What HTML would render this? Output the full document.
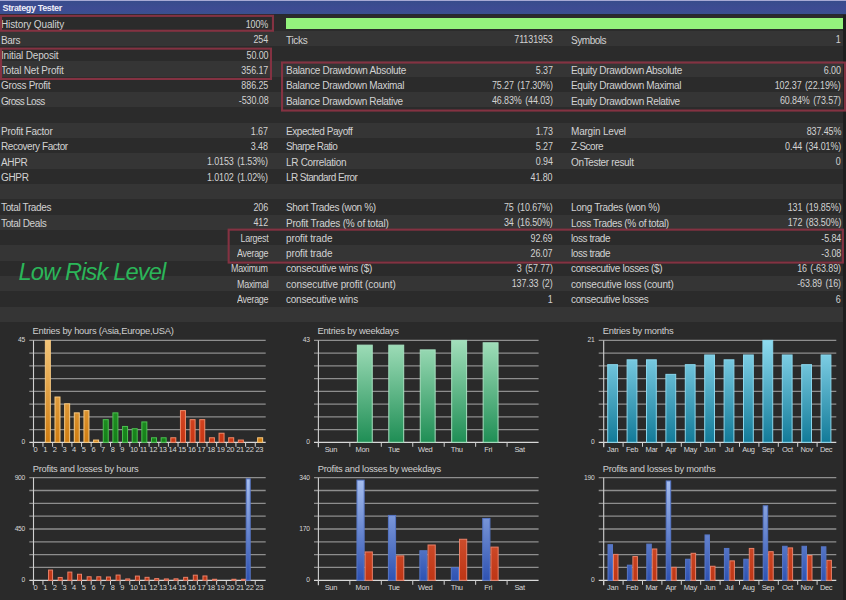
<!DOCTYPE html>
<html><head><meta charset="utf-8">
<style>
html,body{margin:0;padding:0;}
body{width:846px;height:600px;position:relative;overflow:hidden;background:#2a2a2a;font-family:"Liberation Sans",sans-serif;}
.a{position:absolute;white-space:pre;}
.row{position:absolute;left:0;width:843px;}
.t{position:absolute;white-space:pre;color:#d2d2d2;font-size:10px;line-height:12px;letter-spacing:-0.32px;}
.n{position:absolute;white-space:pre;color:#d2d2d2;font-size:10.4px;line-height:12px;letter-spacing:-0.1px;word-spacing:1.2px;text-align:right;transform:scaleX(0.86);transform-origin:right center;}
.box{position:absolute;border:2px solid #843242;box-sizing:border-box;}
.ct{position:absolute;white-space:pre;color:#cfcfcf;font-size:9.4px;line-height:11px;letter-spacing:-0.25px;}
.yl{position:absolute;white-space:pre;color:#d8d8d8;font-size:6.7px;line-height:8px;text-align:right;letter-spacing:-0.3px;}
.xl{position:absolute;white-space:pre;color:#d8d8d8;font-size:7.5px;line-height:8px;letter-spacing:-0.3px;}
</style></head><body>

<div class="a" style="left:0;top:0;width:846px;height:1px;background:#a7a9d4"></div>
<div class="a" style="left:0;top:1px;width:846px;height:12.8px;background:linear-gradient(#384c8c,#3e4b93 60%,#39508e)"></div>
<div class="a" style="left:0;top:13.8px;width:846px;height:1.4px;background:#262830"></div>
<div class="a" style="left:2.6px;top:2.6px;color:#eeeef8;font-weight:bold;font-size:9px;line-height:11px;letter-spacing:-0.38px">Strategy Tester</div>
<div class="a" style="left:843px;top:15px;width:3px;height:585px;background:#1e1e1e"></div>
<div class="row" style="top:15.30px;height:15.35px;background:#2b2b2b"></div>
<div class="row" style="top:30.63px;height:15.35px;background:#353535"></div>
<div class="row" style="top:45.96px;height:15.35px;background:#2b2b2b"></div>
<div class="row" style="top:61.29px;height:15.35px;background:#353535"></div>
<div class="row" style="top:76.62px;height:15.35px;background:#2b2b2b"></div>
<div class="row" style="top:91.95px;height:15.35px;background:#353535"></div>
<div class="row" style="top:107.28px;height:15.35px;background:#2b2b2b"></div>
<div class="row" style="top:122.61px;height:15.35px;background:#353535"></div>
<div class="row" style="top:137.94px;height:15.35px;background:#2b2b2b"></div>
<div class="row" style="top:153.27px;height:15.35px;background:#353535"></div>
<div class="row" style="top:168.60px;height:15.35px;background:#2b2b2b"></div>
<div class="row" style="top:183.93px;height:15.35px;background:#353535"></div>
<div class="row" style="top:199.26px;height:15.35px;background:#2b2b2b"></div>
<div class="row" style="top:214.59px;height:15.35px;background:#353535"></div>
<div class="row" style="top:229.92px;height:15.35px;background:#2b2b2b"></div>
<div class="row" style="top:245.25px;height:15.35px;background:#353535"></div>
<div class="row" style="top:260.58px;height:15.35px;background:#2b2b2b"></div>
<div class="row" style="top:275.91px;height:15.35px;background:#353535"></div>
<div class="row" style="top:291.24px;height:15.35px;background:#2b2b2b"></div>
<div class="row" style="top:306.57px;height:15.35px;background:#353535"></div>
<div class="t" style="left:1.0px;top:19.33px;letter-spacing:-0.13px">History Quality</div>
<div class="n" style="right:577.9px;top:18.98px">100%</div>
<div class="t" style="left:1.0px;top:34.59px;letter-spacing:-0.33px">Bars</div>
<div class="n" style="right:577.9px;top:34.24px">254</div>
<div class="t" style="left:286.0px;top:34.59px;letter-spacing:-0.33px">Ticks</div>
<div class="n" style="right:293.6px;top:34.24px">71131953</div>
<div class="t" style="left:571.0px;top:34.59px;letter-spacing:-0.457px">Symbols</div>
<div class="n" style="right:5.1px;top:34.24px">1</div>
<div class="t" style="left:1.0px;top:49.85px;letter-spacing:-0.175px">Initial Deposit</div>
<div class="n" style="right:577.9px;top:49.50px">50.00</div>
<div class="t" style="left:1.0px;top:65.11px;letter-spacing:-0.19px">Total Net Profit</div>
<div class="n" style="right:577.9px;top:64.76px">356.17</div>
<div class="t" style="left:286.0px;top:65.11px;letter-spacing:-0.287px">Balance Drawdown Absolute</div>
<div class="n" style="right:293.6px;top:64.76px">5.37</div>
<div class="t" style="left:571.0px;top:65.11px;letter-spacing:-0.33px">Equity Drawdown Absolute</div>
<div class="n" style="right:5.1px;top:64.76px">6.00</div>
<div class="t" style="left:1.0px;top:80.37px;letter-spacing:-0.3px">Gross Profit</div>
<div class="n" style="right:577.9px;top:80.02px">886.25</div>
<div class="t" style="left:286.0px;top:80.37px;letter-spacing:-0.33px">Balance Drawdown Maximal</div>
<div class="n" style="right:293.6px;top:80.02px">75.27 (17.30%)</div>
<div class="t" style="left:571.0px;top:80.37px;letter-spacing:-0.33px">Equity Drawdown Maximal</div>
<div class="n" style="right:5.1px;top:80.02px">102.37 (22.19%)</div>
<div class="t" style="left:1.0px;top:95.63px;letter-spacing:-0.7px">Gross Loss</div>
<div class="n" style="right:577.9px;top:95.28px">-530.08</div>
<div class="t" style="left:286.0px;top:95.63px;letter-spacing:-0.33px">Balance Drawdown Relative</div>
<div class="n" style="right:293.6px;top:95.28px">46.83% (44.03)</div>
<div class="t" style="left:571.0px;top:95.63px;letter-spacing:-0.33px">Equity Drawdown Relative</div>
<div class="n" style="right:5.1px;top:95.28px">60.84% (73.57)</div>
<div class="t" style="left:1.0px;top:126.15px;letter-spacing:-0.227px">Profit Factor</div>
<div class="n" style="right:577.9px;top:125.80px">1.67</div>
<div class="t" style="left:286.0px;top:126.15px;letter-spacing:-0.419px">Expected Payoff</div>
<div class="n" style="right:293.6px;top:125.80px">1.73</div>
<div class="t" style="left:571.0px;top:126.15px;letter-spacing:-0.203px">Margin Level</div>
<div class="n" style="right:5.1px;top:125.80px">837.45%</div>
<div class="t" style="left:1.0px;top:141.41px;letter-spacing:-0.445px">Recovery Factor</div>
<div class="n" style="right:577.9px;top:141.06px">3.48</div>
<div class="t" style="left:286.0px;top:141.41px;letter-spacing:-0.6px">Sharpe Ratio</div>
<div class="n" style="right:293.6px;top:141.06px">5.27</div>
<div class="t" style="left:571.0px;top:141.41px;letter-spacing:-0.5px">Z-Score</div>
<div class="n" style="right:5.1px;top:141.06px">0.44 (34.01%)</div>
<div class="t" style="left:1.0px;top:156.67px;letter-spacing:-0.33px">AHPR</div>
<div class="n" style="right:577.9px;top:156.32px">1.0153 (1.53%)</div>
<div class="t" style="left:286.0px;top:156.67px;letter-spacing:-0.309px">LR Correlation</div>
<div class="n" style="right:293.6px;top:156.32px">0.94</div>
<div class="t" style="left:571.0px;top:156.67px;letter-spacing:-0.345px">OnTester result</div>
<div class="n" style="right:5.1px;top:156.32px">0</div>
<div class="t" style="left:1.0px;top:171.93px;letter-spacing:-0.33px">GHPR</div>
<div class="n" style="right:577.9px;top:171.58px">1.0102 (1.02%)</div>
<div class="t" style="left:286.0px;top:171.93px;letter-spacing:-0.576px">LR Standard Error</div>
<div class="n" style="right:293.6px;top:171.58px">41.80</div>
<div class="t" style="left:1.0px;top:202.45px;letter-spacing:-0.368px">Total Trades</div>
<div class="n" style="right:577.9px;top:202.10px">206</div>
<div class="t" style="left:286.0px;top:202.45px;letter-spacing:-0.345px">Short Trades (won %)</div>
<div class="n" style="right:293.6px;top:202.10px">75 (10.67%)</div>
<div class="t" style="left:571.0px;top:202.45px;letter-spacing:-0.333px">Long Trades (won %)</div>
<div class="n" style="right:5.1px;top:202.10px">131 (19.85%)</div>
<div class="t" style="left:1.0px;top:217.71px;letter-spacing:-0.367px">Total Deals</div>
<div class="n" style="right:577.9px;top:217.36px">412</div>
<div class="t" style="left:286.0px;top:217.71px;letter-spacing:-0.203px">Profit Trades (% of total)</div>
<div class="n" style="right:293.6px;top:217.36px">34 (16.50%)</div>
<div class="t" style="left:571.0px;top:217.71px;letter-spacing:-0.324px">Loss Trades (% of total)</div>
<div class="n" style="right:5.1px;top:217.36px">172 (83.50%)</div>
<div class="n" style="right:577.9px;top:232.97px;letter-spacing:-0.33px;word-spacing:0">Largest</div>
<div class="t" style="left:286.0px;top:232.97px;letter-spacing:-0.12px">profit trade</div>
<div class="n" style="right:293.6px;top:232.62px">92.69</div>
<div class="t" style="left:571.0px;top:232.97px;letter-spacing:-0.433px">loss trade</div>
<div class="n" style="right:5.1px;top:232.62px">-5.84</div>
<div class="n" style="right:577.9px;top:248.23px;letter-spacing:-0.33px;word-spacing:0">Average</div>
<div class="t" style="left:286.0px;top:248.23px;letter-spacing:-0.12px">profit trade</div>
<div class="n" style="right:293.6px;top:247.88px">26.07</div>
<div class="t" style="left:571.0px;top:248.23px;letter-spacing:-0.433px">loss trade</div>
<div class="n" style="right:5.1px;top:247.88px">-3.08</div>
<div class="n" style="right:577.9px;top:263.49px;letter-spacing:-0.33px;word-spacing:0">Maximum</div>
<div class="t" style="left:286.0px;top:263.49px;letter-spacing:-0.224px">consecutive wins ($)</div>
<div class="n" style="right:293.6px;top:263.14px">3 (57.77)</div>
<div class="t" style="left:571.0px;top:263.49px;letter-spacing:-0.348px">consecutive losses ($)</div>
<div class="n" style="right:5.1px;top:263.14px">16 (-63.89)</div>
<div class="n" style="right:577.9px;top:278.75px;letter-spacing:-0.33px;word-spacing:0">Maximal</div>
<div class="t" style="left:286.0px;top:278.75px;letter-spacing:-0.08px">consecutive profit (count)</div>
<div class="n" style="right:293.6px;top:278.40px">137.33 (2)</div>
<div class="t" style="left:571.0px;top:278.75px;letter-spacing:-0.197px">consecutive loss (count)</div>
<div class="n" style="right:5.1px;top:278.40px">-63.89 (16)</div>
<div class="n" style="right:577.9px;top:294.01px;letter-spacing:-0.33px;word-spacing:0">Average</div>
<div class="t" style="left:286.0px;top:294.01px;letter-spacing:-0.226px">consecutive wins</div>
<div class="n" style="right:293.6px;top:293.66px">1</div>
<div class="t" style="left:571.0px;top:294.01px;letter-spacing:-0.361px">consecutive losses</div>
<div class="n" style="right:5.1px;top:293.66px">6</div>
<div class="a" style="left:286px;top:18.2px;width:556.5px;height:10.8px;background:#94f37d"></div>
<svg class="a" style="left:0;top:0" width="846" height="300" viewBox="0 0 846 300"><rect x="1.05" y="15.85" width="271.90" height="14.90" fill="none" stroke="#843242" stroke-width="2.1"/><rect x="1.05" y="48.65" width="269.90" height="30.30" fill="none" stroke="#843242" stroke-width="2.1"/><rect x="282.05" y="62.55" width="562.90" height="48.00" fill="none" stroke="#843242" stroke-width="2.1"/><rect x="228.65" y="229.65" width="614.20" height="32.90" fill="none" stroke="#843242" stroke-width="2.1"/></svg>
<div class="a" style="left:18.6px;top:258px;color:#2bb659;font-style:italic;font-size:23.7px;line-height:28px;letter-spacing:-0.9px">Low Risk Level</div>
<div class="a" style="left:0;top:321.90px;width:843px;height:278.10px;background:#2a2a2a"></div>
<div class="ct" style="left:32.6px;top:325.2px">Entries by hours (Asia,Europe,USA)</div>
<div class="yl" style="right:821.1px;top:336.3px">45</div>
<div class="yl" style="right:821.1px;top:438.2px">0</div>
<div class="xl" style="left:33.50px;top:445.6px">0</div>
<div class="xl" style="left:43.15px;top:445.6px">1</div>
<div class="xl" style="left:52.80px;top:445.6px">2</div>
<div class="xl" style="left:62.45px;top:445.6px">3</div>
<div class="xl" style="left:72.10px;top:445.6px">4</div>
<div class="xl" style="left:81.75px;top:445.6px">5</div>
<div class="xl" style="left:91.40px;top:445.6px">6</div>
<div class="xl" style="left:101.05px;top:445.6px">7</div>
<div class="xl" style="left:110.70px;top:445.6px">8</div>
<div class="xl" style="left:120.35px;top:445.6px">9</div>
<div class="xl" style="left:130.00px;top:445.6px">10</div>
<div class="xl" style="left:139.65px;top:445.6px">11</div>
<div class="xl" style="left:149.30px;top:445.6px">12</div>
<div class="xl" style="left:158.95px;top:445.6px">13</div>
<div class="xl" style="left:168.60px;top:445.6px">14</div>
<div class="xl" style="left:178.25px;top:445.6px">15</div>
<div class="xl" style="left:187.90px;top:445.6px">16</div>
<div class="xl" style="left:197.55px;top:445.6px">17</div>
<div class="xl" style="left:207.20px;top:445.6px">18</div>
<div class="xl" style="left:216.85px;top:445.6px">19</div>
<div class="xl" style="left:226.50px;top:445.6px">20</div>
<div class="xl" style="left:236.15px;top:445.6px">21</div>
<div class="xl" style="left:245.80px;top:445.6px">22</div>
<div class="xl" style="left:255.45px;top:445.6px">23</div>
<div class="ct" style="left:317.4px;top:325.2px">Entries by weekdays</div>
<div class="yl" style="right:536.4px;top:336.3px">43</div>
<div class="yl" style="right:536.4px;top:438.2px">0</div>
<div class="xl" style="left:310.90px;width:40px;text-align:center;top:445.6px">Sun</div>
<div class="xl" style="left:342.35px;width:40px;text-align:center;top:445.6px">Mon</div>
<div class="xl" style="left:373.80px;width:40px;text-align:center;top:445.6px">Tue</div>
<div class="xl" style="left:405.25px;width:40px;text-align:center;top:445.6px">Wed</div>
<div class="xl" style="left:436.70px;width:40px;text-align:center;top:445.6px">Thu</div>
<div class="xl" style="left:468.15px;width:40px;text-align:center;top:445.6px">Fri</div>
<div class="xl" style="left:499.60px;width:40px;text-align:center;top:445.6px">Sat</div>
<div class="ct" style="left:602.7px;top:325.2px">Entries by months</div>
<div class="yl" style="right:251.7px;top:336.3px">21</div>
<div class="yl" style="right:251.7px;top:438.2px">0</div>
<div class="xl" style="left:592.70px;width:40px;text-align:center;top:445.6px">Jan</div>
<div class="xl" style="left:612.10px;width:40px;text-align:center;top:445.6px">Feb</div>
<div class="xl" style="left:631.50px;width:40px;text-align:center;top:445.6px">Mar</div>
<div class="xl" style="left:650.90px;width:40px;text-align:center;top:445.6px">Apr</div>
<div class="xl" style="left:670.30px;width:40px;text-align:center;top:445.6px">May</div>
<div class="xl" style="left:689.70px;width:40px;text-align:center;top:445.6px">Jun</div>
<div class="xl" style="left:709.10px;width:40px;text-align:center;top:445.6px">Jul</div>
<div class="xl" style="left:728.50px;width:40px;text-align:center;top:445.6px">Aug</div>
<div class="xl" style="left:747.90px;width:40px;text-align:center;top:445.6px">Sep</div>
<div class="xl" style="left:767.30px;width:40px;text-align:center;top:445.6px">Oct</div>
<div class="xl" style="left:786.70px;width:40px;text-align:center;top:445.6px">Nov</div>
<div class="xl" style="left:806.10px;width:40px;text-align:center;top:445.6px">Dec</div>
<div class="ct" style="left:32.7px;top:462.5px">Profits and losses by hours</div>
<div class="yl" style="right:821.1px;top:473.6px">900</div>
<div class="yl" style="right:821.1px;top:524.9px">450</div>
<div class="yl" style="right:821.1px;top:576.2px">0</div>
<div class="xl" style="left:33.50px;top:583.6px">0</div>
<div class="xl" style="left:43.15px;top:583.6px">1</div>
<div class="xl" style="left:52.80px;top:583.6px">2</div>
<div class="xl" style="left:62.45px;top:583.6px">3</div>
<div class="xl" style="left:72.10px;top:583.6px">4</div>
<div class="xl" style="left:81.75px;top:583.6px">5</div>
<div class="xl" style="left:91.40px;top:583.6px">6</div>
<div class="xl" style="left:101.05px;top:583.6px">7</div>
<div class="xl" style="left:110.70px;top:583.6px">8</div>
<div class="xl" style="left:120.35px;top:583.6px">9</div>
<div class="xl" style="left:130.00px;top:583.6px">10</div>
<div class="xl" style="left:139.65px;top:583.6px">11</div>
<div class="xl" style="left:149.30px;top:583.6px">12</div>
<div class="xl" style="left:158.95px;top:583.6px">13</div>
<div class="xl" style="left:168.60px;top:583.6px">14</div>
<div class="xl" style="left:178.25px;top:583.6px">15</div>
<div class="xl" style="left:187.90px;top:583.6px">16</div>
<div class="xl" style="left:197.55px;top:583.6px">17</div>
<div class="xl" style="left:207.20px;top:583.6px">18</div>
<div class="xl" style="left:216.85px;top:583.6px">19</div>
<div class="xl" style="left:226.50px;top:583.6px">20</div>
<div class="xl" style="left:236.15px;top:583.6px">21</div>
<div class="xl" style="left:245.80px;top:583.6px">22</div>
<div class="xl" style="left:255.45px;top:583.6px">23</div>
<div class="ct" style="left:317.7px;top:462.5px">Profits and losses by weekdays</div>
<div class="yl" style="right:536.4px;top:473.6px">340</div>
<div class="yl" style="right:536.4px;top:524.9px">170</div>
<div class="yl" style="right:536.4px;top:576.2px">0</div>
<div class="xl" style="left:310.90px;width:40px;text-align:center;top:583.6px">Sun</div>
<div class="xl" style="left:342.35px;width:40px;text-align:center;top:583.6px">Mon</div>
<div class="xl" style="left:373.80px;width:40px;text-align:center;top:583.6px">Tue</div>
<div class="xl" style="left:405.25px;width:40px;text-align:center;top:583.6px">Wed</div>
<div class="xl" style="left:436.70px;width:40px;text-align:center;top:583.6px">Thu</div>
<div class="xl" style="left:468.15px;width:40px;text-align:center;top:583.6px">Fri</div>
<div class="xl" style="left:499.60px;width:40px;text-align:center;top:583.6px">Sat</div>
<div class="ct" style="left:602.7px;top:462.5px">Profits and losses by months</div>
<div class="yl" style="right:251.7px;top:473.6px">190</div>
<div class="yl" style="right:251.7px;top:576.2px">0</div>
<div class="xl" style="left:592.70px;width:40px;text-align:center;top:583.6px">Jan</div>
<div class="xl" style="left:612.10px;width:40px;text-align:center;top:583.6px">Feb</div>
<div class="xl" style="left:631.50px;width:40px;text-align:center;top:583.6px">Mar</div>
<div class="xl" style="left:650.90px;width:40px;text-align:center;top:583.6px">Apr</div>
<div class="xl" style="left:670.30px;width:40px;text-align:center;top:583.6px">May</div>
<div class="xl" style="left:689.70px;width:40px;text-align:center;top:583.6px">Jun</div>
<div class="xl" style="left:709.10px;width:40px;text-align:center;top:583.6px">Jul</div>
<div class="xl" style="left:728.50px;width:40px;text-align:center;top:583.6px">Aug</div>
<div class="xl" style="left:747.90px;width:40px;text-align:center;top:583.6px">Sep</div>
<div class="xl" style="left:767.30px;width:40px;text-align:center;top:583.6px">Oct</div>
<div class="xl" style="left:786.70px;width:40px;text-align:center;top:583.6px">Nov</div>
<div class="xl" style="left:806.10px;width:40px;text-align:center;top:583.6px">Dec</div>
<svg class="a" style="left:0;top:0" width="846" height="600" viewBox="0 0 846 600"><defs><linearGradient id="gOr" gradientUnits="userSpaceOnUse" x1="0" y1="340.4" x2="0" y2="442.3"><stop offset="0" stop-color="#f3c578"/><stop offset="1" stop-color="#cf7c10"/></linearGradient><linearGradient id="gGr" gradientUnits="userSpaceOnUse" x1="0" y1="340.4" x2="0" y2="442.3"><stop offset="0" stop-color="#40b040"/><stop offset="1" stop-color="#148018"/></linearGradient><linearGradient id="gRd" gradientUnits="userSpaceOnUse" x1="0" y1="340.4" x2="0" y2="442.3"><stop offset="0" stop-color="#f07050"/><stop offset="1" stop-color="#c83512"/></linearGradient><linearGradient id="gWk" gradientUnits="userSpaceOnUse" x1="0" y1="340.4" x2="0" y2="442.3"><stop offset="0" stop-color="#a2dfbb"/><stop offset="1" stop-color="#1f8e55"/></linearGradient><linearGradient id="gMo" gradientUnits="userSpaceOnUse" x1="0" y1="340.4" x2="0" y2="442.3"><stop offset="0" stop-color="#8edbf0"/><stop offset="1" stop-color="#127a98"/></linearGradient><linearGradient id="gBl" gradientUnits="userSpaceOnUse" x1="0" y1="477.7" x2="0" y2="580.3"><stop offset="0" stop-color="#a8c0f0"/><stop offset="1" stop-color="#2e52b2"/></linearGradient><linearGradient id="gRl" gradientUnits="userSpaceOnUse" x1="0" y1="477.7" x2="0" y2="580.3"><stop offset="0" stop-color="#e2704f"/><stop offset="1" stop-color="#bf3514"/></linearGradient></defs><line x1="29.3" y1="340.40" x2="265.7" y2="340.40" stroke="#8e8e8e" stroke-width="1.3"/><line x1="29.3" y1="353.14" x2="265.7" y2="353.14" stroke="#8e8e8e" stroke-width="1.3"/><line x1="29.3" y1="365.88" x2="265.7" y2="365.88" stroke="#8e8e8e" stroke-width="1.3"/><line x1="29.3" y1="378.61" x2="265.7" y2="378.61" stroke="#8e8e8e" stroke-width="1.3"/><line x1="29.3" y1="391.35" x2="265.7" y2="391.35" stroke="#8e8e8e" stroke-width="1.3"/><line x1="29.3" y1="404.09" x2="265.7" y2="404.09" stroke="#8e8e8e" stroke-width="1.3"/><line x1="29.3" y1="416.82" x2="265.7" y2="416.82" stroke="#8e8e8e" stroke-width="1.3"/><line x1="29.3" y1="429.56" x2="265.7" y2="429.56" stroke="#8e8e8e" stroke-width="1.3"/><line x1="29.3" y1="442.30" x2="265.7" y2="442.30" stroke="#d8d8d8" stroke-width="1.3"/><line x1="33.5" y1="340.40" x2="33.5" y2="447.30" stroke="#d0d0d0" stroke-width="1.1"/><line x1="33.30" y1="442.30" x2="33.30" y2="446.80" stroke="#d0d0d0" stroke-width="1"/><line x1="42.95" y1="442.30" x2="42.95" y2="446.80" stroke="#d0d0d0" stroke-width="1"/><line x1="52.60" y1="442.30" x2="52.60" y2="446.80" stroke="#d0d0d0" stroke-width="1"/><line x1="62.25" y1="442.30" x2="62.25" y2="446.80" stroke="#d0d0d0" stroke-width="1"/><line x1="71.90" y1="442.30" x2="71.90" y2="446.80" stroke="#d0d0d0" stroke-width="1"/><line x1="81.55" y1="442.30" x2="81.55" y2="446.80" stroke="#d0d0d0" stroke-width="1"/><line x1="91.20" y1="442.30" x2="91.20" y2="446.80" stroke="#d0d0d0" stroke-width="1"/><line x1="100.85" y1="442.30" x2="100.85" y2="446.80" stroke="#d0d0d0" stroke-width="1"/><line x1="110.50" y1="442.30" x2="110.50" y2="446.80" stroke="#d0d0d0" stroke-width="1"/><line x1="120.15" y1="442.30" x2="120.15" y2="446.80" stroke="#d0d0d0" stroke-width="1"/><line x1="129.80" y1="442.30" x2="129.80" y2="446.80" stroke="#d0d0d0" stroke-width="1"/><line x1="139.45" y1="442.30" x2="139.45" y2="446.80" stroke="#d0d0d0" stroke-width="1"/><line x1="149.10" y1="442.30" x2="149.10" y2="446.80" stroke="#d0d0d0" stroke-width="1"/><line x1="158.75" y1="442.30" x2="158.75" y2="446.80" stroke="#d0d0d0" stroke-width="1"/><line x1="168.40" y1="442.30" x2="168.40" y2="446.80" stroke="#d0d0d0" stroke-width="1"/><line x1="178.05" y1="442.30" x2="178.05" y2="446.80" stroke="#d0d0d0" stroke-width="1"/><line x1="187.70" y1="442.30" x2="187.70" y2="446.80" stroke="#d0d0d0" stroke-width="1"/><line x1="197.35" y1="442.30" x2="197.35" y2="446.80" stroke="#d0d0d0" stroke-width="1"/><line x1="207.00" y1="442.30" x2="207.00" y2="446.80" stroke="#d0d0d0" stroke-width="1"/><line x1="216.65" y1="442.30" x2="216.65" y2="446.80" stroke="#d0d0d0" stroke-width="1"/><line x1="226.30" y1="442.30" x2="226.30" y2="446.80" stroke="#d0d0d0" stroke-width="1"/><line x1="235.95" y1="442.30" x2="235.95" y2="446.80" stroke="#d0d0d0" stroke-width="1"/><line x1="245.60" y1="442.30" x2="245.60" y2="446.80" stroke="#d0d0d0" stroke-width="1"/><line x1="255.25" y1="442.30" x2="255.25" y2="446.80" stroke="#d0d0d0" stroke-width="1"/><rect x="45.35" y="340.40" width="5.00" height="101.90" fill="url(#gOr)" stroke="#f6c880" stroke-width="1"/><rect x="55.00" y="397.01" width="5.00" height="45.29" fill="url(#gOr)" stroke="#f6c880" stroke-width="1"/><rect x="64.65" y="403.80" width="5.00" height="38.50" fill="url(#gOr)" stroke="#f6c880" stroke-width="1"/><rect x="74.30" y="412.86" width="5.00" height="29.44" fill="url(#gOr)" stroke="#f6c880" stroke-width="1"/><rect x="83.95" y="410.60" width="5.00" height="31.70" fill="url(#gOr)" stroke="#f6c880" stroke-width="1"/><rect x="93.60" y="440.04" width="5.00" height="2.26" fill="url(#gOr)" stroke="#f6c880" stroke-width="1"/><rect x="103.25" y="419.66" width="5.00" height="22.64" fill="url(#gGr)" stroke="#4cc050" stroke-width="1"/><rect x="112.90" y="412.86" width="5.00" height="29.44" fill="url(#gGr)" stroke="#4cc050" stroke-width="1"/><rect x="122.55" y="426.45" width="5.00" height="15.85" fill="url(#gGr)" stroke="#4cc050" stroke-width="1"/><rect x="132.20" y="428.71" width="5.00" height="13.59" fill="url(#gGr)" stroke="#4cc050" stroke-width="1"/><rect x="141.85" y="421.92" width="5.00" height="20.38" fill="url(#gGr)" stroke="#4cc050" stroke-width="1"/><rect x="151.50" y="437.77" width="5.00" height="4.53" fill="url(#gGr)" stroke="#4cc050" stroke-width="1"/><rect x="161.15" y="437.77" width="5.00" height="4.53" fill="url(#gGr)" stroke="#4cc050" stroke-width="1"/><rect x="170.80" y="437.77" width="5.00" height="4.53" fill="url(#gRd)" stroke="#f08a68" stroke-width="1"/><rect x="180.45" y="410.60" width="5.00" height="31.70" fill="url(#gRd)" stroke="#f08a68" stroke-width="1"/><rect x="190.10" y="419.66" width="5.00" height="22.64" fill="url(#gRd)" stroke="#f08a68" stroke-width="1"/><rect x="199.75" y="419.66" width="5.00" height="22.64" fill="url(#gRd)" stroke="#f08a68" stroke-width="1"/><rect x="209.40" y="437.77" width="5.00" height="4.53" fill="url(#gRd)" stroke="#f08a68" stroke-width="1"/><rect x="219.05" y="433.24" width="5.00" height="9.06" fill="url(#gRd)" stroke="#f08a68" stroke-width="1"/><rect x="228.70" y="437.77" width="5.00" height="4.53" fill="url(#gRd)" stroke="#f08a68" stroke-width="1"/><rect x="238.35" y="440.04" width="5.00" height="2.26" fill="url(#gRd)" stroke="#f08a68" stroke-width="1"/><rect x="257.65" y="437.77" width="5.00" height="4.53" fill="url(#gOr)" stroke="#f6c880" stroke-width="1"/><line x1="314" y1="340.40" x2="538.6" y2="340.40" stroke="#8e8e8e" stroke-width="1.3"/><line x1="314" y1="353.14" x2="538.6" y2="353.14" stroke="#8e8e8e" stroke-width="1.3"/><line x1="314" y1="365.88" x2="538.6" y2="365.88" stroke="#8e8e8e" stroke-width="1.3"/><line x1="314" y1="378.61" x2="538.6" y2="378.61" stroke="#8e8e8e" stroke-width="1.3"/><line x1="314" y1="391.35" x2="538.6" y2="391.35" stroke="#8e8e8e" stroke-width="1.3"/><line x1="314" y1="404.09" x2="538.6" y2="404.09" stroke="#8e8e8e" stroke-width="1.3"/><line x1="314" y1="416.82" x2="538.6" y2="416.82" stroke="#8e8e8e" stroke-width="1.3"/><line x1="314" y1="429.56" x2="538.6" y2="429.56" stroke="#8e8e8e" stroke-width="1.3"/><line x1="314" y1="442.30" x2="538.6" y2="442.30" stroke="#d8d8d8" stroke-width="1.3"/><line x1="318.4" y1="340.40" x2="318.4" y2="447.30" stroke="#d0d0d0" stroke-width="1.1"/><line x1="318.40" y1="442.30" x2="318.40" y2="446.80" stroke="#d0d0d0" stroke-width="1"/><line x1="349.85" y1="442.30" x2="349.85" y2="446.80" stroke="#d0d0d0" stroke-width="1"/><line x1="381.30" y1="442.30" x2="381.30" y2="446.80" stroke="#d0d0d0" stroke-width="1"/><line x1="412.75" y1="442.30" x2="412.75" y2="446.80" stroke="#d0d0d0" stroke-width="1"/><line x1="444.20" y1="442.30" x2="444.20" y2="446.80" stroke="#d0d0d0" stroke-width="1"/><line x1="475.65" y1="442.30" x2="475.65" y2="446.80" stroke="#d0d0d0" stroke-width="1"/><line x1="507.10" y1="442.30" x2="507.10" y2="446.80" stroke="#d0d0d0" stroke-width="1"/><rect x="357.35" y="345.14" width="14.90" height="97.16" fill="url(#gWk)" stroke="#a6e0bf" stroke-width="1"/><rect x="388.80" y="345.14" width="14.90" height="97.16" fill="url(#gWk)" stroke="#a6e0bf" stroke-width="1"/><rect x="420.25" y="349.88" width="14.90" height="92.42" fill="url(#gWk)" stroke="#a6e0bf" stroke-width="1"/><rect x="451.70" y="340.40" width="14.90" height="101.90" fill="url(#gWk)" stroke="#a6e0bf" stroke-width="1"/><rect x="483.15" y="342.77" width="14.90" height="99.53" fill="url(#gWk)" stroke="#a6e0bf" stroke-width="1"/><line x1="598.7" y1="340.40" x2="836.3" y2="340.40" stroke="#8e8e8e" stroke-width="1.3"/><line x1="598.7" y1="353.14" x2="836.3" y2="353.14" stroke="#8e8e8e" stroke-width="1.3"/><line x1="598.7" y1="365.88" x2="836.3" y2="365.88" stroke="#8e8e8e" stroke-width="1.3"/><line x1="598.7" y1="378.61" x2="836.3" y2="378.61" stroke="#8e8e8e" stroke-width="1.3"/><line x1="598.7" y1="391.35" x2="836.3" y2="391.35" stroke="#8e8e8e" stroke-width="1.3"/><line x1="598.7" y1="404.09" x2="836.3" y2="404.09" stroke="#8e8e8e" stroke-width="1.3"/><line x1="598.7" y1="416.82" x2="836.3" y2="416.82" stroke="#8e8e8e" stroke-width="1.3"/><line x1="598.7" y1="429.56" x2="836.3" y2="429.56" stroke="#8e8e8e" stroke-width="1.3"/><line x1="598.7" y1="442.30" x2="836.3" y2="442.30" stroke="#d8d8d8" stroke-width="1.3"/><line x1="603.7" y1="340.40" x2="603.7" y2="447.30" stroke="#d0d0d0" stroke-width="1.1"/><line x1="603.70" y1="442.30" x2="603.70" y2="446.80" stroke="#d0d0d0" stroke-width="1"/><line x1="623.10" y1="442.30" x2="623.10" y2="446.80" stroke="#d0d0d0" stroke-width="1"/><line x1="642.50" y1="442.30" x2="642.50" y2="446.80" stroke="#d0d0d0" stroke-width="1"/><line x1="661.90" y1="442.30" x2="661.90" y2="446.80" stroke="#d0d0d0" stroke-width="1"/><line x1="681.30" y1="442.30" x2="681.30" y2="446.80" stroke="#d0d0d0" stroke-width="1"/><line x1="700.70" y1="442.30" x2="700.70" y2="446.80" stroke="#d0d0d0" stroke-width="1"/><line x1="720.10" y1="442.30" x2="720.10" y2="446.80" stroke="#d0d0d0" stroke-width="1"/><line x1="739.50" y1="442.30" x2="739.50" y2="446.80" stroke="#d0d0d0" stroke-width="1"/><line x1="758.90" y1="442.30" x2="758.90" y2="446.80" stroke="#d0d0d0" stroke-width="1"/><line x1="778.30" y1="442.30" x2="778.30" y2="446.80" stroke="#d0d0d0" stroke-width="1"/><line x1="797.70" y1="442.30" x2="797.70" y2="446.80" stroke="#d0d0d0" stroke-width="1"/><line x1="817.10" y1="442.30" x2="817.10" y2="446.80" stroke="#d0d0d0" stroke-width="1"/><rect x="607.70" y="364.66" width="9.80" height="77.64" fill="url(#gMo)" stroke="#8ad6ec" stroke-width="1"/><rect x="627.10" y="359.81" width="9.80" height="82.49" fill="url(#gMo)" stroke="#8ad6ec" stroke-width="1"/><rect x="646.50" y="359.81" width="9.80" height="82.49" fill="url(#gMo)" stroke="#8ad6ec" stroke-width="1"/><rect x="665.90" y="374.37" width="9.80" height="67.93" fill="url(#gMo)" stroke="#8ad6ec" stroke-width="1"/><rect x="685.30" y="364.66" width="9.80" height="77.64" fill="url(#gMo)" stroke="#8ad6ec" stroke-width="1"/><rect x="704.70" y="354.96" width="9.80" height="87.34" fill="url(#gMo)" stroke="#8ad6ec" stroke-width="1"/><rect x="724.10" y="359.81" width="9.80" height="82.49" fill="url(#gMo)" stroke="#8ad6ec" stroke-width="1"/><rect x="743.50" y="354.96" width="9.80" height="87.34" fill="url(#gMo)" stroke="#8ad6ec" stroke-width="1"/><rect x="762.90" y="340.40" width="9.80" height="101.90" fill="url(#gMo)" stroke="#8ad6ec" stroke-width="1"/><rect x="782.30" y="354.96" width="9.80" height="87.34" fill="url(#gMo)" stroke="#8ad6ec" stroke-width="1"/><rect x="801.70" y="364.66" width="9.80" height="77.64" fill="url(#gMo)" stroke="#8ad6ec" stroke-width="1"/><rect x="821.10" y="354.96" width="9.80" height="87.34" fill="url(#gMo)" stroke="#8ad6ec" stroke-width="1"/><line x1="29.3" y1="477.70" x2="265.7" y2="477.70" stroke="#8e8e8e" stroke-width="1.3"/><line x1="29.3" y1="490.52" x2="265.7" y2="490.52" stroke="#8e8e8e" stroke-width="1.3"/><line x1="29.3" y1="503.35" x2="265.7" y2="503.35" stroke="#8e8e8e" stroke-width="1.3"/><line x1="29.3" y1="516.17" x2="265.7" y2="516.17" stroke="#8e8e8e" stroke-width="1.3"/><line x1="29.3" y1="529.00" x2="265.7" y2="529.00" stroke="#8e8e8e" stroke-width="1.3"/><line x1="29.3" y1="541.82" x2="265.7" y2="541.82" stroke="#8e8e8e" stroke-width="1.3"/><line x1="29.3" y1="554.65" x2="265.7" y2="554.65" stroke="#8e8e8e" stroke-width="1.3"/><line x1="29.3" y1="567.47" x2="265.7" y2="567.47" stroke="#8e8e8e" stroke-width="1.3"/><line x1="29.3" y1="580.30" x2="265.7" y2="580.30" stroke="#d8d8d8" stroke-width="1.3"/><line x1="33.5" y1="477.70" x2="33.5" y2="585.30" stroke="#d0d0d0" stroke-width="1.1"/><line x1="33.30" y1="580.30" x2="33.30" y2="584.80" stroke="#d0d0d0" stroke-width="1"/><line x1="42.95" y1="580.30" x2="42.95" y2="584.80" stroke="#d0d0d0" stroke-width="1"/><line x1="52.60" y1="580.30" x2="52.60" y2="584.80" stroke="#d0d0d0" stroke-width="1"/><line x1="62.25" y1="580.30" x2="62.25" y2="584.80" stroke="#d0d0d0" stroke-width="1"/><line x1="71.90" y1="580.30" x2="71.90" y2="584.80" stroke="#d0d0d0" stroke-width="1"/><line x1="81.55" y1="580.30" x2="81.55" y2="584.80" stroke="#d0d0d0" stroke-width="1"/><line x1="91.20" y1="580.30" x2="91.20" y2="584.80" stroke="#d0d0d0" stroke-width="1"/><line x1="100.85" y1="580.30" x2="100.85" y2="584.80" stroke="#d0d0d0" stroke-width="1"/><line x1="110.50" y1="580.30" x2="110.50" y2="584.80" stroke="#d0d0d0" stroke-width="1"/><line x1="120.15" y1="580.30" x2="120.15" y2="584.80" stroke="#d0d0d0" stroke-width="1"/><line x1="129.80" y1="580.30" x2="129.80" y2="584.80" stroke="#d0d0d0" stroke-width="1"/><line x1="139.45" y1="580.30" x2="139.45" y2="584.80" stroke="#d0d0d0" stroke-width="1"/><line x1="149.10" y1="580.30" x2="149.10" y2="584.80" stroke="#d0d0d0" stroke-width="1"/><line x1="158.75" y1="580.30" x2="158.75" y2="584.80" stroke="#d0d0d0" stroke-width="1"/><line x1="168.40" y1="580.30" x2="168.40" y2="584.80" stroke="#d0d0d0" stroke-width="1"/><line x1="178.05" y1="580.30" x2="178.05" y2="584.80" stroke="#d0d0d0" stroke-width="1"/><line x1="187.70" y1="580.30" x2="187.70" y2="584.80" stroke="#d0d0d0" stroke-width="1"/><line x1="197.35" y1="580.30" x2="197.35" y2="584.80" stroke="#d0d0d0" stroke-width="1"/><line x1="207.00" y1="580.30" x2="207.00" y2="584.80" stroke="#d0d0d0" stroke-width="1"/><line x1="216.65" y1="580.30" x2="216.65" y2="584.80" stroke="#d0d0d0" stroke-width="1"/><line x1="226.30" y1="580.30" x2="226.30" y2="584.80" stroke="#d0d0d0" stroke-width="1"/><line x1="235.95" y1="580.30" x2="235.95" y2="584.80" stroke="#d0d0d0" stroke-width="1"/><line x1="245.60" y1="580.30" x2="245.60" y2="584.80" stroke="#d0d0d0" stroke-width="1"/><line x1="255.25" y1="580.30" x2="255.25" y2="584.80" stroke="#d0d0d0" stroke-width="1"/><rect x="48.55" y="570.04" width="4.00" height="10.26" fill="url(#gRl)" stroke="#e88068" stroke-width="1"/><rect x="58.20" y="577.45" width="4.00" height="2.85" fill="url(#gRl)" stroke="#e88068" stroke-width="1"/><rect x="67.85" y="572.09" width="4.00" height="8.21" fill="url(#gRl)" stroke="#e88068" stroke-width="1"/><rect x="77.50" y="574.26" width="4.00" height="6.04" fill="url(#gRl)" stroke="#e88068" stroke-width="1"/><rect x="87.15" y="576.77" width="4.00" height="3.53" fill="url(#gRl)" stroke="#e88068" stroke-width="1"/><rect x="96.80" y="576.77" width="4.00" height="3.53" fill="url(#gRl)" stroke="#e88068" stroke-width="1"/><rect x="106.45" y="576.99" width="4.00" height="3.31" fill="url(#gRl)" stroke="#e88068" stroke-width="1"/><rect x="116.10" y="575.06" width="4.00" height="5.24" fill="url(#gRl)" stroke="#e88068" stroke-width="1"/><rect x="125.75" y="578.93" width="4.00" height="1.37" fill="url(#gRl)" stroke="#e88068" stroke-width="1"/><rect x="135.40" y="576.08" width="4.00" height="4.22" fill="url(#gRl)" stroke="#e88068" stroke-width="1"/><rect x="145.05" y="577.34" width="4.00" height="2.96" fill="url(#gRl)" stroke="#e88068" stroke-width="1"/><rect x="154.70" y="578.59" width="4.00" height="1.71" fill="url(#gRl)" stroke="#e88068" stroke-width="1"/><rect x="164.35" y="578.93" width="4.00" height="1.37" fill="url(#gRl)" stroke="#e88068" stroke-width="1"/><rect x="174.00" y="578.82" width="4.00" height="1.48" fill="url(#gRl)" stroke="#e88068" stroke-width="1"/><rect x="183.65" y="577.34" width="4.00" height="2.96" fill="url(#gRl)" stroke="#e88068" stroke-width="1"/><rect x="193.30" y="575.17" width="4.00" height="5.13" fill="url(#gRl)" stroke="#e88068" stroke-width="1"/><rect x="202.95" y="575.97" width="4.00" height="4.33" fill="url(#gRl)" stroke="#e88068" stroke-width="1"/><rect x="212.60" y="579.27" width="4.00" height="1.03" fill="url(#gRl)" stroke="#e88068" stroke-width="1"/><rect x="231.90" y="579.27" width="4.00" height="1.03" fill="url(#gRl)" stroke="#e88068" stroke-width="1"/><rect x="241.55" y="579.27" width="4.00" height="1.03" fill="url(#gRl)" stroke="#e88068" stroke-width="1"/><rect x="246.20" y="478.84" width="4.00" height="101.46" fill="url(#gBl)" stroke="#5676c6" stroke-width="1"/><line x1="314" y1="477.70" x2="538.6" y2="477.70" stroke="#8e8e8e" stroke-width="1.3"/><line x1="314" y1="490.52" x2="538.6" y2="490.52" stroke="#8e8e8e" stroke-width="1.3"/><line x1="314" y1="503.35" x2="538.6" y2="503.35" stroke="#8e8e8e" stroke-width="1.3"/><line x1="314" y1="516.17" x2="538.6" y2="516.17" stroke="#8e8e8e" stroke-width="1.3"/><line x1="314" y1="529.00" x2="538.6" y2="529.00" stroke="#8e8e8e" stroke-width="1.3"/><line x1="314" y1="541.82" x2="538.6" y2="541.82" stroke="#8e8e8e" stroke-width="1.3"/><line x1="314" y1="554.65" x2="538.6" y2="554.65" stroke="#8e8e8e" stroke-width="1.3"/><line x1="314" y1="567.47" x2="538.6" y2="567.47" stroke="#8e8e8e" stroke-width="1.3"/><line x1="314" y1="580.30" x2="538.6" y2="580.30" stroke="#d8d8d8" stroke-width="1.3"/><line x1="318.4" y1="477.70" x2="318.4" y2="585.30" stroke="#d0d0d0" stroke-width="1.1"/><line x1="318.40" y1="580.30" x2="318.40" y2="584.80" stroke="#d0d0d0" stroke-width="1"/><line x1="349.85" y1="580.30" x2="349.85" y2="584.80" stroke="#d0d0d0" stroke-width="1"/><line x1="381.30" y1="580.30" x2="381.30" y2="584.80" stroke="#d0d0d0" stroke-width="1"/><line x1="412.75" y1="580.30" x2="412.75" y2="584.80" stroke="#d0d0d0" stroke-width="1"/><line x1="444.20" y1="580.30" x2="444.20" y2="584.80" stroke="#d0d0d0" stroke-width="1"/><line x1="475.65" y1="580.30" x2="475.65" y2="584.80" stroke="#d0d0d0" stroke-width="1"/><line x1="507.10" y1="580.30" x2="507.10" y2="584.80" stroke="#d0d0d0" stroke-width="1"/><rect x="356.95" y="480.11" width="7.20" height="100.19" fill="url(#gBl)" stroke="#5676c6" stroke-width="1"/><rect x="365.15" y="551.93" width="7.20" height="28.37" fill="url(#gRl)" stroke="#e88068" stroke-width="1"/><rect x="388.40" y="515.42" width="7.20" height="64.88" fill="url(#gBl)" stroke="#5676c6" stroke-width="1"/><rect x="396.60" y="555.86" width="7.20" height="24.44" fill="url(#gRl)" stroke="#e88068" stroke-width="1"/><rect x="419.85" y="550.73" width="7.20" height="29.57" fill="url(#gBl)" stroke="#5676c6" stroke-width="1"/><rect x="428.05" y="544.99" width="7.20" height="35.31" fill="url(#gRl)" stroke="#e88068" stroke-width="1"/><rect x="451.30" y="567.63" width="7.20" height="12.67" fill="url(#gBl)" stroke="#5676c6" stroke-width="1"/><rect x="459.50" y="539.26" width="7.20" height="41.04" fill="url(#gRl)" stroke="#e88068" stroke-width="1"/><rect x="482.75" y="518.44" width="7.20" height="61.86" fill="url(#gBl)" stroke="#5676c6" stroke-width="1"/><rect x="490.95" y="547.11" width="7.20" height="33.19" fill="url(#gRl)" stroke="#e88068" stroke-width="1"/><line x1="598.7" y1="477.70" x2="836.3" y2="477.70" stroke="#8e8e8e" stroke-width="1.3"/><line x1="598.7" y1="490.52" x2="836.3" y2="490.52" stroke="#8e8e8e" stroke-width="1.3"/><line x1="598.7" y1="503.35" x2="836.3" y2="503.35" stroke="#8e8e8e" stroke-width="1.3"/><line x1="598.7" y1="516.17" x2="836.3" y2="516.17" stroke="#8e8e8e" stroke-width="1.3"/><line x1="598.7" y1="529.00" x2="836.3" y2="529.00" stroke="#8e8e8e" stroke-width="1.3"/><line x1="598.7" y1="541.82" x2="836.3" y2="541.82" stroke="#8e8e8e" stroke-width="1.3"/><line x1="598.7" y1="554.65" x2="836.3" y2="554.65" stroke="#8e8e8e" stroke-width="1.3"/><line x1="598.7" y1="567.47" x2="836.3" y2="567.47" stroke="#8e8e8e" stroke-width="1.3"/><line x1="598.7" y1="580.30" x2="836.3" y2="580.30" stroke="#d8d8d8" stroke-width="1.3"/><line x1="603.7" y1="477.70" x2="603.7" y2="585.30" stroke="#d0d0d0" stroke-width="1.1"/><line x1="603.70" y1="580.30" x2="603.70" y2="584.80" stroke="#d0d0d0" stroke-width="1"/><line x1="623.10" y1="580.30" x2="623.10" y2="584.80" stroke="#d0d0d0" stroke-width="1"/><line x1="642.50" y1="580.30" x2="642.50" y2="584.80" stroke="#d0d0d0" stroke-width="1"/><line x1="661.90" y1="580.30" x2="661.90" y2="584.80" stroke="#d0d0d0" stroke-width="1"/><line x1="681.30" y1="580.30" x2="681.30" y2="584.80" stroke="#d0d0d0" stroke-width="1"/><line x1="700.70" y1="580.30" x2="700.70" y2="584.80" stroke="#d0d0d0" stroke-width="1"/><line x1="720.10" y1="580.30" x2="720.10" y2="584.80" stroke="#d0d0d0" stroke-width="1"/><line x1="739.50" y1="580.30" x2="739.50" y2="584.80" stroke="#d0d0d0" stroke-width="1"/><line x1="758.90" y1="580.30" x2="758.90" y2="584.80" stroke="#d0d0d0" stroke-width="1"/><line x1="778.30" y1="580.30" x2="778.30" y2="584.80" stroke="#d0d0d0" stroke-width="1"/><line x1="797.70" y1="580.30" x2="797.70" y2="584.80" stroke="#d0d0d0" stroke-width="1"/><line x1="817.10" y1="580.30" x2="817.10" y2="584.80" stroke="#d0d0d0" stroke-width="1"/><rect x="608.00" y="544.66" width="4.50" height="35.64" fill="url(#gBl)" stroke="#5676c6" stroke-width="1"/><rect x="613.50" y="554.38" width="4.50" height="25.92" fill="url(#gRl)" stroke="#e88068" stroke-width="1"/><rect x="627.40" y="565.18" width="4.50" height="15.12" fill="url(#gBl)" stroke="#5676c6" stroke-width="1"/><rect x="632.90" y="556.54" width="4.50" height="23.76" fill="url(#gRl)" stroke="#e88068" stroke-width="1"/><rect x="646.80" y="544.12" width="4.50" height="36.18" fill="url(#gBl)" stroke="#5676c6" stroke-width="1"/><rect x="652.30" y="548.98" width="4.50" height="31.32" fill="url(#gRl)" stroke="#e88068" stroke-width="1"/><rect x="666.20" y="480.94" width="4.50" height="99.36" fill="url(#gBl)" stroke="#5676c6" stroke-width="1"/><rect x="671.70" y="567.34" width="4.50" height="12.96" fill="url(#gRl)" stroke="#e88068" stroke-width="1"/><rect x="685.60" y="559.24" width="4.50" height="21.06" fill="url(#gBl)" stroke="#5676c6" stroke-width="1"/><rect x="691.10" y="553.30" width="4.50" height="27.00" fill="url(#gRl)" stroke="#e88068" stroke-width="1"/><rect x="705.00" y="534.94" width="4.50" height="45.36" fill="url(#gBl)" stroke="#5676c6" stroke-width="1"/><rect x="710.50" y="566.26" width="4.50" height="14.04" fill="url(#gRl)" stroke="#e88068" stroke-width="1"/><rect x="724.40" y="548.44" width="4.50" height="31.86" fill="url(#gBl)" stroke="#5676c6" stroke-width="1"/><rect x="729.90" y="560.86" width="4.50" height="19.44" fill="url(#gRl)" stroke="#e88068" stroke-width="1"/><rect x="743.80" y="559.24" width="4.50" height="21.06" fill="url(#gBl)" stroke="#5676c6" stroke-width="1"/><rect x="749.30" y="548.44" width="4.50" height="31.86" fill="url(#gRl)" stroke="#e88068" stroke-width="1"/><rect x="763.20" y="505.78" width="4.50" height="74.52" fill="url(#gBl)" stroke="#5676c6" stroke-width="1"/><rect x="768.70" y="551.68" width="4.50" height="28.62" fill="url(#gRl)" stroke="#e88068" stroke-width="1"/><rect x="782.60" y="546.28" width="4.50" height="34.02" fill="url(#gBl)" stroke="#5676c6" stroke-width="1"/><rect x="788.10" y="547.90" width="4.50" height="32.40" fill="url(#gRl)" stroke="#e88068" stroke-width="1"/><rect x="802.00" y="546.28" width="4.50" height="34.02" fill="url(#gBl)" stroke="#5676c6" stroke-width="1"/><rect x="807.50" y="555.46" width="4.50" height="24.84" fill="url(#gRl)" stroke="#e88068" stroke-width="1"/><rect x="821.40" y="546.82" width="4.50" height="33.48" fill="url(#gBl)" stroke="#5676c6" stroke-width="1"/><rect x="826.90" y="560.32" width="4.50" height="19.98" fill="url(#gRl)" stroke="#e88068" stroke-width="1"/></svg>
</body></html>
